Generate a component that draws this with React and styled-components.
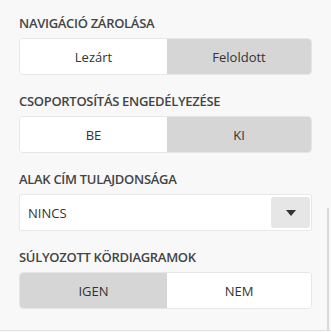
import React from "react";
import styled, { createGlobalStyle } from "styled-components";

const Global = createGlobalStyle`
  html, body { margin: 0; padding: 0; background: #f8f8f8; }
  body { font-family: "Open Sans", "Segoe UI", sans-serif; }
`;

const Panel = styled.div`
  position: relative;
  width: 331px;
  height: 331px;
  box-sizing: border-box;
  padding: 14px 19px 0 19px;
  background: #f8f8f8;
  border-bottom: 1px solid #e2e2e2;
  display: flex;
  flex-direction: column;
  gap: 17px;
`;

const Section = styled.div`
  display: flex;
  flex-direction: column;
  gap: 6px;
`;

const Title = styled.div`
  font-size: 13px;
  line-height: 18px;
  font-weight: 600;
  color: #444;
  letter-spacing: -0.3px;
  white-space: nowrap;
`;

const Toggle = styled.div`
  display: grid;
  grid-template-columns: 147px 1fr;
  height: 37px;
  box-sizing: border-box;
  border: 1px solid #e6e6e6;
  border-radius: 4px;
  overflow: hidden;
  background: #fff;
`;

const Option = styled.div`
  display: flex;
  align-items: center;
  justify-content: center;
  font-size: 13px;
  color: #333;
  background: ${(p) => (p.$active ? "#ffffff" : "#d6d6d6")};
`;

const Select = styled.div`
  display: flex;
  align-items: center;
  justify-content: space-between;
  height: 37px;
  box-sizing: border-box;
  border: 1px solid #e8e8e8;
  border-radius: 2px;
  background: #fff;
  padding: 2px 1px 2px 8px;
`;

const SelectText = styled.span`
  font-size: 13px;
  color: #333;
`;

const Caret = styled.div`
  width: 39px;
  height: 31px;
  border-radius: 3px;
  background: #e6e6e6;
  display: flex;
  align-items: center;
  justify-content: center;
`;

const Scroll = styled.div`
  position: absolute;
  right: 2px;
  top: 208px;
  bottom: 0;
  width: 2px;
  background: #d8d8d8;
`;

function ToggleGroup({ title, left, right, active }) {
  return (
    <Section>
      <Title>{title}</Title>
      <Toggle>
        <Option $active={active === 0}>{left}</Option>
        <Option $active={active === 1}>{right}</Option>
      </Toggle>
    </Section>
  );
}

export default function App() {
  return (
    <>
      <Global />
      <Panel>
        <ToggleGroup title="NAVIGÁCIÓ ZÁROLÁSA" left="Lezárt" right="Feloldott" active={0} />
        <ToggleGroup title="CSOPORTOSÍTÁS ENGEDÉLYEZÉSE" left="BE" right="KI" active={0} />
        <Section>
          <Title>ALAK CÍM TULAJDONSÁGA</Title>
          <Select>
            <SelectText>NINCS</SelectText>
            <Caret>
              <svg width="10" height="6" viewBox="0 0 10 6">
                <path d="M0 0 H10 L5 6 Z" fill="#333" />
              </svg>
            </Caret>
          </Select>
        </Section>
        <ToggleGroup title="SÚLYOZOTT KÖRDIAGRAMOK" left="IGEN" right="NEM" active={1} />
        <Scroll />
      </Panel>
    </>
  );
}
